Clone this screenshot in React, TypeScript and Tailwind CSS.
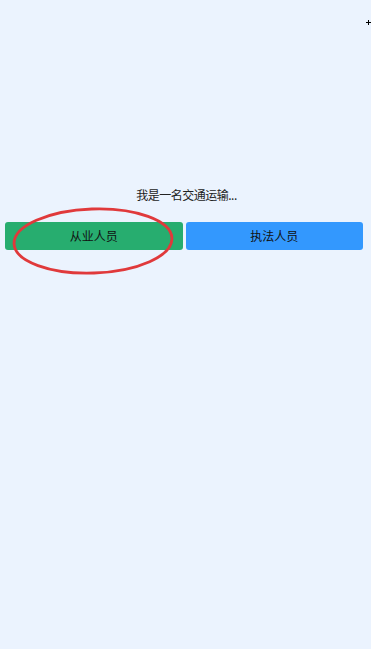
export default function App() {
  return (
    <div
      className="relative h-[649px] w-[371px] overflow-hidden bg-[#ebf3fe]"
      style={{ fontFamily: '"Noto Sans CJK SC", "Noto Sans", sans-serif' }}
    >
      {/* tiny cross marker top right */}
      <div className="absolute left-[366px] top-[20px] h-[5px] w-[5px]">
        <div className="absolute left-[2px] top-0 h-[5px] w-px bg-black" />
        <div className="absolute left-0 top-[2px] h-px w-[5px] bg-black" />
      </div>

      <div className="flex flex-col pt-[186px]">
        <p className="pl-[2px] text-center text-[12px] leading-[18px] tracking-[-0.5px] text-[#222]">我是一名交通运输...</p>
        <div className="mt-[18px] flex gap-[3px] pl-[5px] pr-[8px]">
          <button className="flex h-[28px] flex-1 items-center justify-center rounded-[3px] bg-[#27ad6f] text-[12px] text-[#111]">
            从业人员
          </button>
          <button className="flex h-[28px] flex-1 items-center justify-center rounded-[3px] bg-[#3398fe] text-[12px] text-[#111]">
            执法人员
          </button>
        </div>
      </div>

      {/* red annotation ellipse */}
      <svg className="pointer-events-none absolute left-0 top-0" width="371" height="649">
        <ellipse cx="93" cy="241" rx="79" ry="32" fill="none" stroke="#e0393b" strokeWidth="2.8" transform="rotate(-2 93 241)" />
      </svg>
    </div>
  );
}
